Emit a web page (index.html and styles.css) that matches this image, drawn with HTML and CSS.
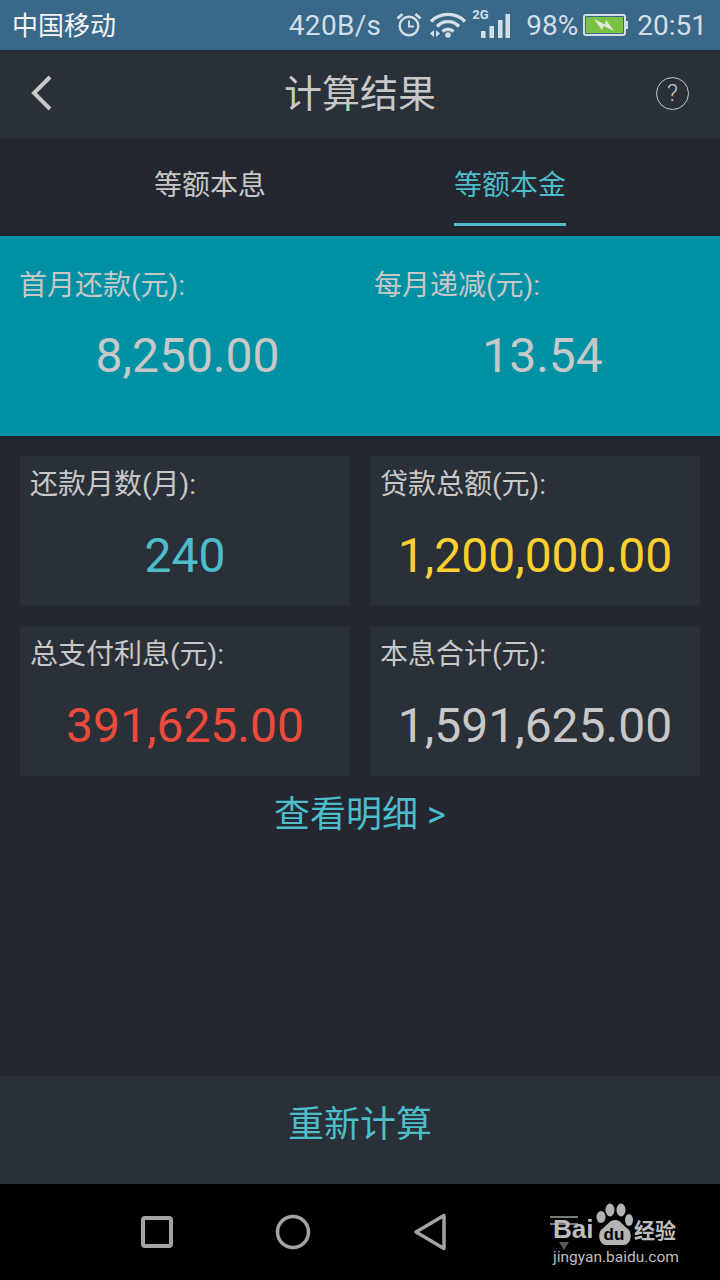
FILE: index.html
```html
<!DOCTYPE html>
<html lang="zh-CN">
<head>
    <meta charset="UTF-8">
    <meta name="viewport" content="width=device-width, initial-scale=1.0">
    <title>计算结果</title>
    <link rel="stylesheet" href="styles.css">
</head>
<body>
    <div class="statusbar">
        <span class="carrier">中国移动</span>
        <div class="status-right">
            <span class="speed">420B/s</span>
            <svg class="ic-alarm" width="26" height="26" viewBox="0 0 26 26" fill="none" stroke="#d3dfe8">
                <circle cx="13" cy="14" r="9.300" stroke-width="2.400"/>
                <path d="M13 8.500V14.500H18" stroke-width="2"/>
                <path d="M1.500 6.500L6.500 2M24.500 6.500L19.500 2" stroke-width="2.800"/>
            </svg>
            <svg class="ic-wifi" width="37" height="26" viewBox="0 0 37 26" fill="none" stroke="#d3dfe8" stroke-width="3.400">
                <path d="M2 9.500C11 0 27 0 36 9.500"/>
                <path d="M8 14.500C14 8 24 8 30 14.500"/>
                <path d="M13.500 19.500C16.500 16.500 21.500 16.500 24.500 19.500"/>
                <circle cx="19" cy="23" r="2.800" fill="#d3dfe8" stroke="none"/>
                <path d="M5 18V25L1 21.500ZM7 18V25L11 21.500Z" fill="#d3dfe8" stroke="none"/>
            </svg>
            <div class="signal">
                <span class="net">2G</span>
                <svg width="29" height="24" viewBox="0 0 29 24" fill="#d3dfe8">
                    <rect x="0" y="17" width="4.500" height="7"/>
                    <rect x="8.500" y="12" width="4.500" height="12"/>
                    <rect x="17" y="6" width="4.500" height="18"/>
                    <rect x="24.500" y="0" width="4.500" height="24"/>
                </svg>
            </div>
            <span class="pct">98%</span>
            <svg class="ic-batt" width="45" height="22" viewBox="0 0 45 22">
                <rect x="1" y="1" width="41" height="20" rx="2" fill="#3a6888" stroke="#d3dfe8" stroke-width="2"/>
                <rect x="3" y="3" width="37" height="16" fill="#7cc242"/>
                <rect x="43" y="7" width="2" height="8" fill="#d3dfe8"/>
                <path d="M11 5L22 10.500L23 6L31 17L20.500 12L19 16Z" fill="#dfeadb"/>
            </svg>
            <span class="time">20:51</span>
        </div>
    </div>

    <div class="titlebar">
        <svg class="back" width="22" height="36" viewBox="0 0 22 36" fill="none" stroke="#c8c8c8" stroke-width="4">
            <path d="M19 2L3 18L19 34"/>
        </svg>
        <h1 class="title">计算结果</h1>
        <div class="help">?</div>
    </div>

    <div class="tabs">
        <div class="tab"><span class="tab-text">等额本息</span></div>
        <div class="tab"><span class="tab-text active">等额本金</span></div>
    </div>

    <div class="hero">
        <div class="hero-col">
            <div class="label">首月还款(元):</div>
            <div class="hero-value">8,250.00</div>
        </div>
        <div class="hero-col">
            <div class="label">每月递减(元):</div>
            <div class="hero-value">13.54</div>
        </div>
    </div>

    <div class="grid">
        <div class="card">
            <div class="label">还款月数(月):</div>
            <div class="value teal">240</div>
        </div>
        <div class="card">
            <div class="label">贷款总额(元):</div>
            <div class="value yellow">1,200,000.00</div>
        </div>
        <div class="card">
            <div class="label">总支付利息(元):</div>
            <div class="value red">391,625.00</div>
        </div>
        <div class="card">
            <div class="label">本息合计(元):</div>
            <div class="value">1,591,625.00</div>
        </div>
    </div>

    <div class="detail">查看明细 &gt;</div>

    <div class="spacer"></div>

    <div class="recalc">重新计算</div>

    <div class="navbar">
        <svg width="34" height="34" viewBox="0 0 34 34" fill="none" stroke="#a3a3a3" stroke-width="4">
            <rect x="3" y="3" width="28" height="28" rx="2"/>
        </svg>
        <svg width="36" height="36" viewBox="0 0 36 36" fill="none" stroke="#a3a3a3" stroke-width="3.500">
            <circle cx="18" cy="18" r="15.500"/>
        </svg>
        <svg width="34" height="38" viewBox="0 0 34 38" fill="none" stroke="#a3a3a3" stroke-width="3.500" stroke-linejoin="round">
            <path d="M31 2.500V35.500L3 19Z"/>
        </svg>
        <svg width="30" height="36" viewBox="0 0 30 36" fill="#7a7a7a">
            <rect x="1" y="2" width="28" height="2"/>
            <rect x="1" y="9" width="28" height="2"/>
            <path d="M10 28H20L15 36Z" fill="#5a5a5a"/>
        </svg>
    </div>

    <div class="watermark">
        <div class="wm-top">
            <span class="wm-bai">Bai</span>
            <svg class="wm-paw" width="38" height="42" viewBox="0 0 38 42" fill="#b4b4b4">
                <ellipse cx="5" cy="14" rx="4.500" ry="6"/>
                <ellipse cx="14" cy="7" rx="4.500" ry="6.500"/>
                <ellipse cx="25" cy="7" rx="4.500" ry="6.500"/>
                <ellipse cx="33" cy="17" rx="4" ry="6"/>
                <path d="M19 17C25 17 27 23 32 26C37 30 35 42 28 42H10C3 42 1 30 6 26C11 23 13 17 19 17Z"/>
                <text class="wm-du" x="18" y="37">du</text>
            </svg>
            <span class="wm-cn">经验</span>
        </div>
        <div class="wm-url">jingyan.baidu.com</div>
    </div>
</body>
</html>
```

FILE: styles.css
```css
*{
    box-sizing: border-box;
}
html, body{
    margin: 0;
    height: 100%;
}
body{
    width: 720px;
    height: 1280px;
    display: flex;
    flex-direction: column;
    position: relative;
    overflow: hidden;
    background-color: #24272f;
    color: #c8c8c8;
    font-family: "Roboto", "Noto Sans CJK SC", sans-serif;
}
.statusbar{
    height: 50px;
    flex: none;
    background-color: #3a6888;
    display: flex;
    align-items: center;
    justify-content: space-between;
    padding: 0 13px 0 12px;
}
.carrier{
    color: #f2f5f7;
    font-size: 26px;
    padding-bottom: 3px;
}
.status-right{
    display: flex;
    align-items: center;
    color: #d3dfe8;
    font-size: 28px;
}
.speed{
    margin-right: 15px;
    letter-spacing: 0.3px;
}
.ic-alarm{
    margin-right: 7px;
}
.ic-wifi{
    margin-right: 6px;
}
.signal{
    width: 38px;
    height: 24px;
    margin-top: 1px;
    position: relative;
    display: flex;
    justify-content: flex-end;
}
.net{
    position: absolute;
    left: 0;
    top: -5px;
    font-size: 13px;
    line-height: 12px;
    font-weight: 700;
}
.pct{
    margin-left: 16px;
    margin-right: 5px;
}
.ic-batt{
    margin-right: 9px;
}
.titlebar{
    height: 88px;
    flex: none;
    background-color: #2a3038;
    display: grid;
    grid-template-columns: 1fr auto 1fr;
    align-items: center;
    padding: 0 31px;
}
.back{
    margin-top: -2px;
}
.title{
    margin: 0;
    padding-bottom: 8px;
    font-size: 38px;
    font-weight: 400;
    color: #c8c8c8;
}
.help{
    justify-self: end;
    width: 33px;
    height: 33px;
    margin-top: -2px;
    border: 1.500px solid #c8c8c8;
    border-radius: 50%;
    text-align: center;
    font-size: 24px;
    line-height: 30px;
    font-weight: 300;
}
.tabs{
    height: 88px;
    flex: none;
    display: flex;
    padding: 0 60px;
    margin-bottom: 10px;
}
.tab{
    flex: 1;
    text-align: center;
}
.tab-text{
    display: inline-block;
    width: 112px;
    height: 88px;
    font-size: 28px;
    line-height: 96px;
    white-space: nowrap;
}
.tab-text.active{
    color: #4dbdcb;
    border-bottom: 3px solid #4dbdcb;
}
.hero{
    height: 200px;
    flex: none;
    background-color: #0091a5;
    display: flex;
    padding: 29px 0 0 20px;
}
.hero-col{
    flex: none;
    width: 355px;
}
.hero-col .label{
    margin-left: -1px;
}
.label{
    font-size: 28px;
    line-height: 42px;
    white-space: nowrap;
}
.hero-value{
    font-size: 48px;
    line-height: 54px;
    margin-top: 22px;
    width: 335px;
    text-align: center;
}
.grid{
    display: grid;
    grid-template-columns: 330px 330px;
    gap: 20px;
    padding: 20px 20px 0;
}
.card{
    height: 150px;
    background-color: #2a3038;
    padding: 8px 0 0 10px;
}
.value{
    font-size: 48px;
    line-height: 54px;
    margin: 23px 0 0 -10px;
    text-align: center;
    white-space: nowrap;
}
.teal{
    color: #4dbdcb;
}
.yellow{
    color: #fdd02f;
}
.red{
    color: #ea4b3c;
}
.detail{
    color: #4dbdcb;
    font-size: 36px;
    line-height: 78px;
    text-align: center;
}
.spacer{
    flex: 1;
}
.recalc{
    height: 108px;
    flex: none;
    background-color: #2a3038;
    color: #4dbdcb;
    font-size: 36px;
    line-height: 98px;
    text-align: center;
}
.navbar{
    height: 96px;
    flex: none;
    background-color: #000;
    display: flex;
    align-items: center;
    gap: 102px;
    padding-left: 140px;
}
.navbar svg:nth-child(2){
    margin-left: -1px;
}
.watermark{
    position: absolute;
    left: 553px;
    top: 1203px;
    width: 128px;
    color: #bdbdbd;
}
.wm-top{
    display: flex;
    align-items: flex-end;
    height: 42px;
}
.wm-bai{
    width: 43px;
    font-family: "Liberation Sans", sans-serif;
    font-size: 26px;
    font-weight: 700;
    line-height: 32px;
}
.wm-paw{
    flex: none;
}
.wm-du{
    font-family: "Liberation Sans", sans-serif;
    font-size: 17px;
    font-weight: 700;
    text-anchor: middle;
    fill: #000;
}
.wm-cn{
    font-size: 21px;
    line-height: 28px;
    font-weight: 700;
    white-space: nowrap;
}
.wm-url{
    margin-top: 2px;
    font-size: 15.500px;
    line-height: 20px;
    white-space: nowrap;
}
```
